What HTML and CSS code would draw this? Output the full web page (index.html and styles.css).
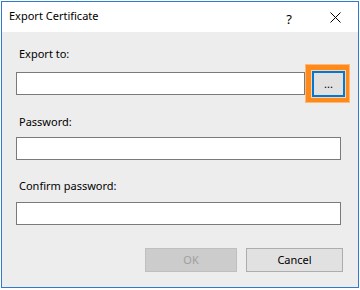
FILE: index.html
```html
<!DOCTYPE html>
<html>
<head>
<meta charset="utf-8">
<link rel="stylesheet" href="styles.css">
</head>
<body>
<div class="window">
  <div class="titlebar">
    <div class="title">Export Certificate</div>
    <div class="tb-btn help">?</div>
    <div class="tb-btn close">
      <svg width="11" height="11" viewBox="0 0 11 11"><path d="M0.5 0.5 L10.5 10.5 M10.5 0.5 L0.5 10.5" stroke="#000" stroke-width="1" fill="none"/></svg>
    </div>
  </div>
  <div class="content">
    <div class="label first">Export to:</div>
    <div class="row">
      <div class="input grow"></div>
      <div class="highlight"><div class="browse">...</div></div>
    </div>
    <div class="label second">Password:</div>
    <div class="input"></div>
    <div class="label third">Confirm password:</div>
    <div class="input"></div>
    <div class="buttons">
      <div class="btn ok">OK</div>
      <div class="btn cancel">Cancel</div>
    </div>
  </div>
</div>
</body>
</html>
```

FILE: styles.css
```css
html, body {
  margin: 0;
  padding: 0;
  background: #ffffff;
}
body {
  font-family: "Noto Sans", "DejaVu Sans", sans-serif;
  font-size: 11px;
  color: #000;
}
.window {
  margin: 1px 0 0 1px;
  width: 356px;
  height: 285px;
  border: 1px solid #2c7bd0;
  background: #ededed;
  display: flex;
  flex-direction: column;
}
.titlebar {
  height: 30px;
  background: #ffffff;
  display: flex;
  flex-shrink: 0;
}
.title {
  flex: 1;
  padding: 6px 0 0 7px;
  line-height: 15px;
  font-size: 11px;
}
.tb-btn {
  width: 46px;
  height: 30px;
  display: flex;
  justify-content: center;
}
.help {
  font-size: 13px;
  line-height: 18px;
  padding-top: 8px;
  box-sizing: border-box;
}
.close {
  align-items: center;
}
.close svg {
  display: block;
}
.content {
  flex: 1;
  padding: 0 17px 0 14px;
  display: flex;
  flex-direction: column;
}
.label {
  line-height: 15px;
  padding-left: 3px;
}
.label.first { margin-top: 14px; }
.label.second { margin-top: 11px; margin-bottom: 8px; }
.label.third { margin-top: 18px; margin-bottom: 9px; }
.row {
  margin-top: 3px;
  margin-right: -9px;
  display: flex;
  align-items: center;
}
.input {
  height: 21px;
  border: 1px solid #7a7a7a;
  background: #ffffff;
}
.input.grow {
  flex: 1;
}
.highlight {
  border: 1px solid #ffb878;
  background: #ff8a1c;
  padding: 5px 3px 4px 5px;
}
.browse {
  margin: 1px;
  width: 29px;
  height: 22px;
  border: 2px solid #0078d7;
  box-shadow: 0 0 0 1px #fdd3a8;
  background: #e1e1e1;
  text-align: center;
  line-height: 22px;
  font-size: 11px;
}
.buttons {
  margin-top: 23px;
  margin-right: -2px;
  display: flex;
  justify-content: flex-end;
  gap: 9px;
}
.btn {
  height: 22px;
  line-height: 22px;
  text-align: center;
}
.ok {
  width: 90px;
  background: #cccccc;
  border: 1px solid #bfbfbf;
  color: #a0a0a0;
}
.cancel {
  width: 95px;
  background: #e1e1e1;
  border: 1px solid #adadad;
}
```
